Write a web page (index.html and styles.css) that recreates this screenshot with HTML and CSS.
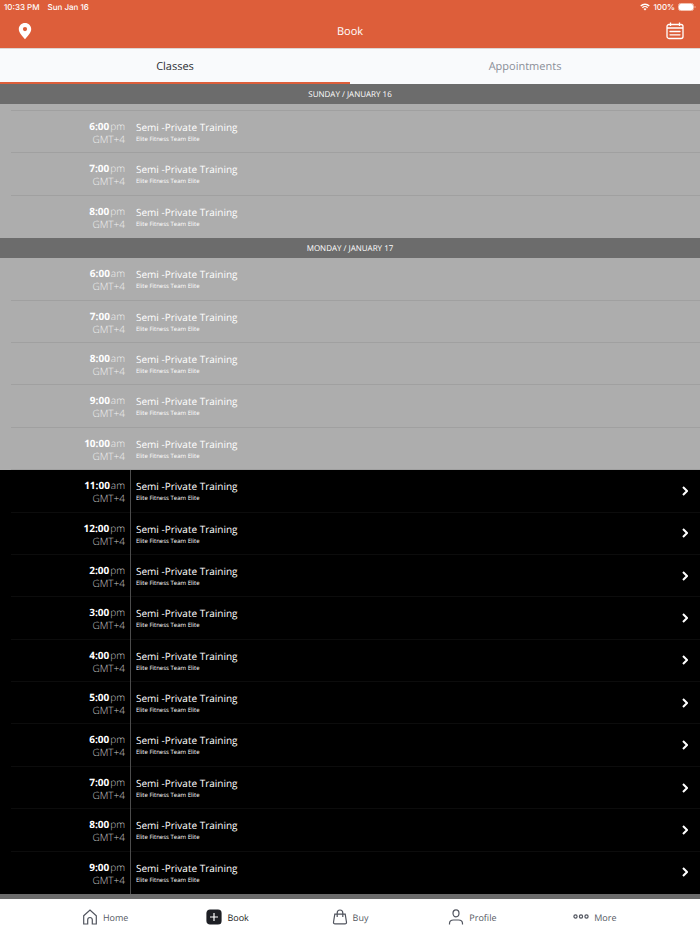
FILE: index.html
```html
<!DOCTYPE html>
<html lang="en">
  <head>
    <meta charset="UTF-8" />
    <meta name="viewport" content="width=device-width, initial-scale=1.0" />
    <title>Book</title>
    <link rel="stylesheet" href="styles.css">
  </head>
  <body>
    <header class="top">
      <div class="status-bar">
        <span>10:33 PM</span>
        <span>Sun Jan 16</span>
        <div class="status-right">
          <svg width="10" height="8" viewBox="0 0 20 16" fill="none" stroke="#fff" stroke-width="2.8">
            <path d="M1.5 6a12 12 0 0 1 17 0M4.8 9.3a7.4 7.4 0 0 1 10.4 0" />
            <path d="M10 15l-3-3.2a4.2 4.2 0 0 1 6 0z" fill="#fff" stroke="none" />
          </svg>
          <span>100%</span>
          <svg width="18" height="8" viewBox="0 0 18 8">
            <rect x="0.5" y="0.5" width="15" height="7" rx="2" fill="none" stroke="#f3bfad" />
            <rect x="1" y="1" width="14" height="6" rx="1.5" fill="#fff" />
            <path d="M16.6 2.7v2.6q1-.4 1-1.3t-1-1.3z" fill="#f3bfad" />
          </svg>
        </div>
      </div>
      <div class="title-bar">
        <button class="icon-button" aria-label="Location">
          <svg width="14" height="18" viewBox="0 0 14 18" fill="#fff">
            <path fill-rule="evenodd" d="M7 1C3.5 1 .8 3.7.8 7.1.8 11 4.2 14 7 17.2 9.8 14 13.2 11 13.2 7.1 13.2 3.7 10.5 1 7 1zM7 5a2.1 2.1 0 1 1 0 4.2A2.1 2.1 0 0 1 7 5z" />
          </svg>
        </button>
        <h1>Book</h1>
        <button class="icon-button" aria-label="Calendar">
          <svg width="18" height="18" viewBox="0 0 18 18" fill="none" stroke="#fff" stroke-width="1.3">
            <rect x="1" y="2.5" width="16" height="14" rx="2" />
            <path d="M1 6h16M4.5.5v3.5M13.5.5v3.5" />
            <path d="M4 9.5h10M4 12.8h10" stroke-linecap="round" />
          </svg>
        </button>
      </div>
    </header>

    <nav class="tabs">
      <a href="#classes" class="tab active">Classes</a>
      <a href="#appointments" class="tab">Appointments</a>
    </nav>

    <main class="schedule" id="classes">
      <h2>SUNDAY / JANUARY 16</h2>
      <ul class="sessions sunday">
        <li class="past"><div class="session">
          <div class="when"><b>6:00</b>pm<br>GMT+4</div>
          <div class="what"><h3>Semi -Private Training</h3><p>Elite Fitness Team Elite</p></div>
        </div></li>
        <li class="past"><div class="session">
          <div class="when"><b>7:00</b>pm<br>GMT+4</div>
          <div class="what"><h3>Semi -Private Training</h3><p>Elite Fitness Team Elite</p></div>
        </div></li>
        <li class="past"><div class="session">
          <div class="when"><b>8:00</b>pm<br>GMT+4</div>
          <div class="what"><h3>Semi -Private Training</h3><p>Elite Fitness Team Elite</p></div>
        </div></li>
      </ul>

      <h2>MONDAY / JANUARY 17</h2>
      <ul class="sessions monday">
        <li class="past"><div class="session">
          <div class="when"><b>6:00</b>am<br>GMT+4</div>
          <div class="what"><h3>Semi -Private Training</h3><p>Elite Fitness Team Elite</p></div>
        </div></li>
        <li class="past"><div class="session">
          <div class="when"><b>7:00</b>am<br>GMT+4</div>
          <div class="what"><h3>Semi -Private Training</h3><p>Elite Fitness Team Elite</p></div>
        </div></li>
        <li class="past"><div class="session">
          <div class="when"><b>8:00</b>am<br>GMT+4</div>
          <div class="what"><h3>Semi -Private Training</h3><p>Elite Fitness Team Elite</p></div>
        </div></li>
        <li class="past"><div class="session">
          <div class="when"><b>9:00</b>am<br>GMT+4</div>
          <div class="what"><h3>Semi -Private Training</h3><p>Elite Fitness Team Elite</p></div>
        </div></li>
        <li class="past"><div class="session">
          <div class="when"><b>10:00</b>am<br>GMT+4</div>
          <div class="what"><h3>Semi -Private Training</h3><p>Elite Fitness Team Elite</p></div>
        </div></li>
        <li class="open"><a href="#" class="session">
          <div class="when"><b>11:00</b>am<br>GMT+4</div>
          <div class="what"><h3>Semi -Private Training</h3><p>Elite Fitness Team Elite</p></div>
          <svg class="chevron" viewBox="0 0 6 10"><path d="M1 1l4 4-4 4" /></svg>
        </a></li>
        <li class="open"><a href="#" class="session">
          <div class="when"><b>12:00</b>pm<br>GMT+4</div>
          <div class="what"><h3>Semi -Private Training</h3><p>Elite Fitness Team Elite</p></div>
          <svg class="chevron" viewBox="0 0 6 10"><path d="M1 1l4 4-4 4" /></svg>
        </a></li>
        <li class="open"><a href="#" class="session">
          <div class="when"><b>2:00</b>pm<br>GMT+4</div>
          <div class="what"><h3>Semi -Private Training</h3><p>Elite Fitness Team Elite</p></div>
          <svg class="chevron" viewBox="0 0 6 10"><path d="M1 1l4 4-4 4" /></svg>
        </a></li>
        <li class="open"><a href="#" class="session">
          <div class="when"><b>3:00</b>pm<br>GMT+4</div>
          <div class="what"><h3>Semi -Private Training</h3><p>Elite Fitness Team Elite</p></div>
          <svg class="chevron" viewBox="0 0 6 10"><path d="M1 1l4 4-4 4" /></svg>
        </a></li>
        <li class="open"><a href="#" class="session">
          <div class="when"><b>4:00</b>pm<br>GMT+4</div>
          <div class="what"><h3>Semi -Private Training</h3><p>Elite Fitness Team Elite</p></div>
          <svg class="chevron" viewBox="0 0 6 10"><path d="M1 1l4 4-4 4" /></svg>
        </a></li>
        <li class="open"><a href="#" class="session">
          <div class="when"><b>5:00</b>pm<br>GMT+4</div>
          <div class="what"><h3>Semi -Private Training</h3><p>Elite Fitness Team Elite</p></div>
          <svg class="chevron" viewBox="0 0 6 10"><path d="M1 1l4 4-4 4" /></svg>
        </a></li>
        <li class="open"><a href="#" class="session">
          <div class="when"><b>6:00</b>pm<br>GMT+4</div>
          <div class="what"><h3>Semi -Private Training</h3><p>Elite Fitness Team Elite</p></div>
          <svg class="chevron" viewBox="0 0 6 10"><path d="M1 1l4 4-4 4" /></svg>
        </a></li>
        <li class="open"><a href="#" class="session">
          <div class="when"><b>7:00</b>pm<br>GMT+4</div>
          <div class="what"><h3>Semi -Private Training</h3><p>Elite Fitness Team Elite</p></div>
          <svg class="chevron" viewBox="0 0 6 10"><path d="M1 1l4 4-4 4" /></svg>
        </a></li>
        <li class="open"><a href="#" class="session">
          <div class="when"><b>8:00</b>pm<br>GMT+4</div>
          <div class="what"><h3>Semi -Private Training</h3><p>Elite Fitness Team Elite</p></div>
          <svg class="chevron" viewBox="0 0 6 10"><path d="M1 1l4 4-4 4" /></svg>
        </a></li>
        <li class="open"><a href="#" class="session">
          <div class="when"><b>9:00</b>pm<br>GMT+4</div>
          <div class="what"><h3>Semi -Private Training</h3><p>Elite Fitness Team Elite</p></div>
          <svg class="chevron" viewBox="0 0 6 10"><path d="M1 1l4 4-4 4" /></svg>
        </a></li>
      </ul>
    </main>

    <nav class="bottom-nav">
      <a href="#">
        <svg width="16" height="16" viewBox="0 0 16 16">
          <path d="M1.7 6.8L8 1l6.3 5.8V15h-4v-4.2a2.3 2.3 0 0 0-4.6 0V15h-4z" />
        </svg>
        Home
      </a>
      <a href="#" class="active">
        <svg width="16" height="16" viewBox="0 0 16 16">
          <rect x="1" y="1" width="14" height="14" rx="3" fill="#1d1f24" stroke="#1d1f24" />
          <path d="M8 4v8M4 8h8" stroke="#fff" />
        </svg>
        Book
      </a>
      <a href="#">
        <svg width="16" height="16" viewBox="0 0 16 16">
          <path d="M2.8 5.2h10.4l1.3 8q.1 1.7-1.5 1.7H3q-1.6 0-1.500-1.700z" />
          <path d="M5.2 8V4a2.8 3 0 0 1 5.6 0v4" />
        </svg>
        Buy
      </a>
      <a href="#">
        <svg width="16" height="16" viewBox="0 0 16 16">
          <ellipse cx="8" cy="4.3" rx="3" ry="3.5" />
          <path d="M1.5 15.600v-1q0-3.600 4-3.600h5q4 0 4 3.600v1" />
        </svg>
        Profile
      </a>
      <a href="#">
        <svg width="16" height="16" viewBox="0 0 16 16">
          <circle cx="2.5" cy="7.5" r="1.6" />
          <circle cx="8" cy="7.5" r="1.6" />
          <circle cx="13.5" cy="7.5" r="1.6" />
        </svg>
        More
      </a>
    </nav>
  </body>
</html>
```

FILE: styles.css
```css
* {
  box-sizing: border-box;
}

body {
  display: flex;
  flex-direction: column;
  min-height: 100vh;
  margin: 0;
  background-color: #6c6c6c;
  color: #fff;
  font-family: "Open Sans", "Noto Sans", sans-serif;
  text-rendering: geometricPrecision;
}

h1,
h2,
h3,
p,
ul {
  margin: 0;
  padding: 0;
  font-weight: 400;
}

a {
  color: inherit;
  text-decoration: none;
}

.top {
  background-color: #dd5e3a;
}

.status-bar {
  display: flex;
  align-items: center;
  gap: 8px;
  height: 14px;
  padding: 0 4px;
  font: 500 8px/14px Inter, Roboto, sans-serif;
}

.status-right {
  display: flex;
  align-items: center;
  gap: 3px;
  margin-left: auto;
}

.title-bar {
  display: flex;
  align-items: center;
  justify-content: space-between;
  height: 34px;
  padding: 0 16px;
}

.title-bar h1 {
  font-size: 11px;
}

.icon-button {
  display: flex;
  justify-content: center;
  width: 18px;
  padding: 0;
  background: none;
  border: none;
  cursor: pointer;
}

.tabs {
  display: flex;
  height: 36px;
  background-color: #f9fafc;
  border-top: 1px solid #ddd5d3;
}

.tab {
  flex: 1;
  padding-top: 1px;
  border-bottom: 2px solid transparent;
  color: #8b8f99;
  font-size: 11px;
  line-height: 34px;
  text-align: center;
}

.tab.active {
  border-bottom-color: #dd5e3a;
  color: #2c2e33;
}

.schedule {
  display: flex;
  flex: 1;
  flex-direction: column;
}

.schedule h2 {
  height: 20px;
  background-color: #6c6c6c;
  font-size: 8px;
  line-height: 22px;
  text-align: center;
}

.sessions {
  display: flex;
  flex-direction: column;
  list-style: none;
}

.sunday {
  flex-grow: 3;
}

/* end of the row scrolled under the heading */
.sunday::before {
  content: "";
  height: 7px;
  padding-left: 11px;
  background: #adadad linear-gradient(#a0a0a0, #a0a0a0) bottom / 100% 1px no-repeat;
  background-origin: content-box;
}

.monday {
  flex-grow: 15;
}

.sessions li {
  display: flex;
  flex: 1 0 auto;
  min-height: 42px;
  padding-left: 11px;
}

.past {
  background-color: #adadad;
}

.open {
  background-color: #000;
}

.session {
  display: flex;
  flex: 1;
  border-bottom: 1px solid #a0a0a0;
}

.open .session {
  border-bottom-color: #0c0c0c;
}

.sessions li:last-child .session {
  border-bottom-color: transparent;
}

.when {
  width: 119px;
  padding: 9px 5px 0 0;
  color: #c8c8c8;
  font-size: 10px;
  font-weight: 300;
  line-height: 13px;
  text-align: right;
}

.when b {
  margin-right: 1px;
  color: #fff;
  font-weight: 700;
}

.past .when {
  color: #f0f0f0;
}

.what {
  flex: 1;
  margin-bottom: -1px;
  padding: 9px 0 0 5px;
  border-left: 1px solid transparent;
}

.open .what {
  border-left-color: #4c4c4c;
}

.what h3 {
  font-size: 10px;
  line-height: 14px;
}

.what p {
  font-size: 6px;
  line-height: 10px;
}

.chevron {
  align-self: center;
  width: 6px;
  height: 10px;
  margin-right: 12px;
  fill: none;
  stroke: #fff;
  stroke-width: 2;
}

.bottom-nav {
  display: flex;
  height: 35px;
  margin-top: 5px;
  padding: 1px 44px 0;
  background-color: #fff;
  color: #555963;
  font-size: 9px;
}

.bottom-nav a {
  display: flex;
  flex: 1;
  align-items: center;
  justify-content: center;
  gap: 5px;
}

.bottom-nav .active {
  color: #1d1f24;
}

.bottom-nav svg {
  fill: none;
  stroke: #50545e;
  stroke-width: 1.2;
}
```
